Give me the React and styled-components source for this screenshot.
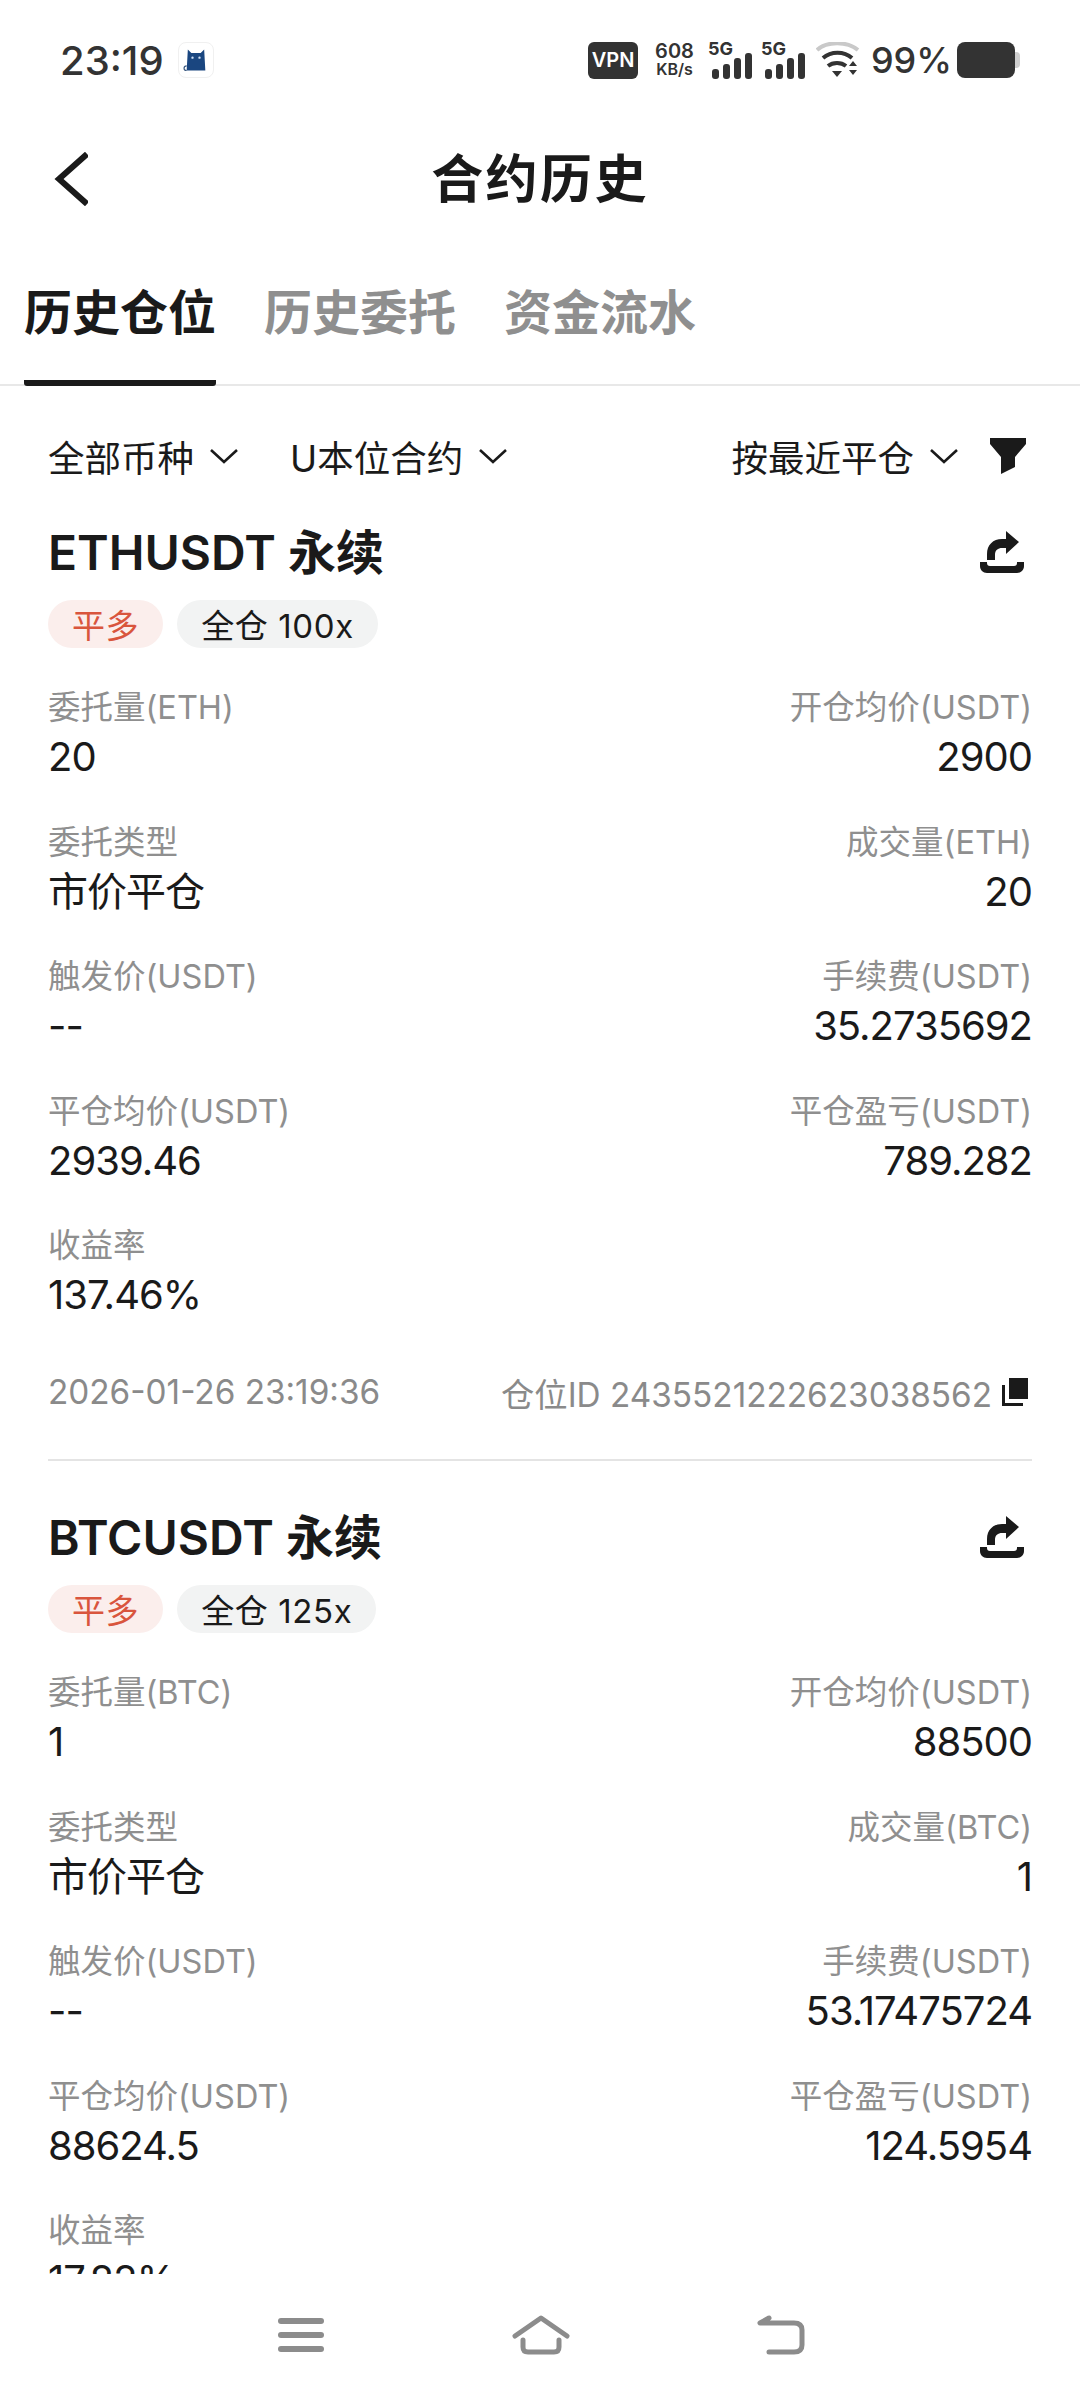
import React from 'react';
import styled, { createGlobalStyle } from 'styled-components';

const SANS = `'Inter', 'Noto Sans CJK SC', sans-serif`;

const positions = [
    {
        symbol: 'ETHUSDT 永续',
        leverage: '全仓 100x',
        unit: 'ETH',
        size: '20',
        open: '2900',
        filled: '20',
        fee: '35.2735692',
        close: '2939.46',
        pnl: '789.282',
        roi: '137.46%',
    },
    {
        symbol: 'BTCUSDT 永续',
        leverage: '全仓 125x',
        unit: 'BTC',
        size: '1',
        open: '88500',
        filled: '1',
        fee: '53.17475724',
        close: '88624.5',
        pnl: '124.5954',
        roi: '17.82%',
        cut: true,
    },
];

function Chevron() {
    return (
        <ChevronIcon viewBox="0 0 28 16" fill="none" stroke="#1a1a1a" strokeWidth="2.6">
            <path d="M1 2l13 12L27 2" />
        </ChevronIcon>
    );
}

function ShareIcon() {
    return (
        <ShareSvg viewBox="0 0 44 42" fill="#1a1a1a">
            <path d="M7 29v-6c0-9 6-15 15-15h4V0l13 11-13 12v-6h-4c-4 0-7 2-7 7v5z" />
            <path d="M0 31h7v1c0 2 1 3 3 3h24c2 0 3-1 3-3v-1h7v4c0 4-3 7-7 7H7c-4 0-7-3-7-7z" />
        </ShareSvg>
    );
}

function SignalBars() {
    return (
        <Signal>
            <SignalLabel>5G</SignalLabel>
            <Bars viewBox="0 0 40 26">
                <rect x="0" y="16" width="7" height="10" rx="3" />
                <rect x="11" y="11" width="7" height="15" rx="3" />
                <rect x="22" y="5" width="7" height="21" rx="3" />
                <rect x="33" y="0" width="7" height="26" rx="3" />
            </Bars>
        </Signal>
    );
}

function Position({ data }) {
    return (
        <Card>
            <CardHead>
                <Symbol>{data.symbol}</Symbol>
                <ShareIcon />
            </CardHead>
            <Tags>
                <Tag $red>平多</Tag>
                <Tag>{data.leverage}</Tag>
            </Tags>
            <Grid>
                <Field>
                    <Label>委托量({data.unit})</Label>
                    <Value>{data.size}</Value>
                </Field>
                <Field $right>
                    <Label>开仓均价(USDT)</Label>
                    <Value>{data.open}</Value>
                </Field>
                <Field>
                    <Label>委托类型</Label>
                    <Value>市价平仓</Value>
                </Field>
                <Field $right>
                    <Label>成交量({data.unit})</Label>
                    <Value>{data.filled}</Value>
                </Field>
                <Field>
                    <Label>触发价(USDT)</Label>
                    <Value>--</Value>
                </Field>
                <Field $right>
                    <Label>手续费(USDT)</Label>
                    <Value>{data.fee}</Value>
                </Field>
                <Field>
                    <Label>平仓均价(USDT)</Label>
                    <Value>{data.close}</Value>
                </Field>
                <Field $right>
                    <Label>平仓盈亏(USDT)</Label>
                    <Value>{data.pnl}</Value>
                </Field>
                <Field>
                    <Label>收益率</Label>
                    <Value>{data.roi}</Value>
                </Field>
            </Grid>
            {!data.cut && (
                <CardFoot>
                    <FootText>2026-01-26 23:19:36</FootText>
                    <FootRight>
                        <FootText>仓位ID 2435521222623038562</FootText>
                        <CopyIcon viewBox="0 0 26 28">
                            <path d="M7 0h19v21H7z" fill="#1a1a1a" />
                            <path d="M0 7h3v18h18v3H0z" fill="#1a1a1a" />
                        </CopyIcon>
                    </FootRight>
                </CardFoot>
            )}
        </Card>
    );
}

export default function App() {
    return (
        <Page>
            <GlobalStyle />
            <StatusBar>
                <StatusLeft>
                    <Clock>23:19</Clock>
                    <AppBadge>
                        <svg width="28" height="28" viewBox="0 0 24 24">
                            <path d="M5 3l3 3h8l3-3 1 18H4z" fill="#1a4680" />
                            <path d="M4 17c-3 0-3 4 0 4" fill="none" stroke="#3c5a80" strokeWidth="1" />
                            <circle cx="9" cy="10" r="1" fill="#cfe0f5" />
                            <circle cx="15" cy="10" r="1" fill="#cfe0f5" />
                        </svg>
                    </AppBadge>
                </StatusLeft>
                <StatusRight>
                    <VpnBadge>VPN</VpnBadge>
                    <Speed>
                        <span>608</span>
                        <SpeedUnit>KB/s</SpeedUnit>
                    </Speed>
                    <SignalBars />
                    <SignalBars />
                    <svg width="44" height="36" viewBox="0 0 44 36" fill="none">
                        <path d="M1 8C11-1 31-1 42 8" stroke="#c9c9c9" strokeWidth="4" />
                        <path d="M7 16c8-7 21-7 29 0" stroke="#333" strokeWidth="4" />
                        <path d="M12 24c5-4 13-4 18 0" stroke="#333" strokeWidth="4" />
                        <path d="M16 29h10l-5 6z" fill="#333" />
                        <path d="M33 24l4-5 4 5zM33 28h8l-4 5z" fill="#333" />
                    </svg>
                    <Battery>99%</Battery>
                    <BatteryIcon>
                        <BatteryFill />
                        <BatteryCap />
                    </BatteryIcon>
                </StatusRight>
            </StatusBar>

            <TitleBar>
                <BackIcon viewBox="0 0 34 54" fill="none" stroke="#1a1a1a" strokeWidth="6">
                    <path d="M33 2L5 27l28 25" />
                </BackIcon>
                <Title>合约历史</Title>
            </TitleBar>

            <Tabs>
                <Tab $active>历史仓位</Tab>
                <Tab>历史委托</Tab>
                <Tab>资金流水</Tab>
            </Tabs>

            <Filters>
                <FilterGroup>
                    <Filter>
                        全部币种
                        <Chevron />
                    </Filter>
                    <Filter>
                        U本位合约
                        <Chevron />
                    </Filter>
                </FilterGroup>
                <FilterGroup>
                    <Filter>
                        按最近平仓
                        <Chevron />
                    </Filter>
                    <svg width="36" height="36" viewBox="0 0 36 36" fill="#1a1a1a">
                        <path d="M0 0h36v6L25 19v10l-14 7V19L0 6z" />
                    </svg>
                </FilterGroup>
            </Filters>

            <List>
                {positions.map((p) => (
                    <Position key={p.symbol} data={p} />
                ))}
            </List>

            <NavBar>
                <svg width="46" height="34" viewBox="0 0 46 34" fill="#8c8c8c">
                    <rect x="0" y="0" width="46" height="6" rx="3" />
                    <rect x="0" y="14" width="46" height="6" rx="3" />
                    <rect x="0" y="28" width="46" height="6" rx="3" />
                </svg>
                <svg width="58" height="40" viewBox="0 0 58 40" fill="none" stroke="#8c8c8c" strokeWidth="5" strokeLinecap="round" strokeLinejoin="round">
                    <path d="M3 21L29 3l26 18" />
                    <path d="M11 25v7c0 4 2 5 5 5h26c3 0 5-1 5-5v-7" />
                </svg>
                <svg width="48" height="40" viewBox="0 0 48 40" fill="none" stroke="#8c8c8c" strokeWidth="5" strokeLinecap="round" strokeLinejoin="round">
                    <path d="M12 3L3 8h34c5 0 8 2 8 7v15c0 5-3 7-8 7H12" />
                </svg>
            </NavBar>
        </Page>
    );
}

const GlobalStyle = createGlobalStyle`
    html, body {
        margin: 0;
        padding: 0;
        background: #fff;
    }
`;

const Page = styled.div`
    background: #fff;
    box-sizing: border-box;
    color: #1a1a1a;
    font-family: ${SANS};
    height: 2400px;
    overflow: hidden;
    position: relative;
    width: 1080px;
`;

const StatusBar = styled.div`
    align-items: center;
    box-sizing: border-box;
    display: flex;
    height: 120px;
    justify-content: space-between;
    padding: 0 60px;
`;

const StatusLeft = styled.div`
    align-items: center;
    display: flex;
    gap: 14px;
`;

const Clock = styled.span`
    color: #333;
    font-size: 40px;
    font-weight: 500;
`;

const AppBadge = styled.span`
    align-items: center;
    border: 1px solid #f0f0f0;
    border-radius: 8px;
    display: flex;
    height: 34px;
    justify-content: center;
    width: 34px;
`;

const StatusRight = styled.div`
    align-items: center;
    color: #333;
    display: flex;
    gap: 11px;
`;

const VpnBadge = styled.span`
    align-items: center;
    background: #333;
    border-radius: 6px;
    color: #fff;
    display: flex;
    font-size: 20px;
    font-weight: 600;
    height: 37px;
    justify-content: center;
    margin-right: 6px;
    width: 50px;
`;

const Speed = styled.span`
    display: flex;
    flex-direction: column;
    font-size: 20px;
    font-weight: 600;
    line-height: 19px;
    margin-right: 5px;
    text-align: center;
`;

const SpeedUnit = styled.span`
    font-size: 16px;
    line-height: 17px;
`;

const Signal = styled.span`
    display: block;
    height: 38px;
    position: relative;
    width: 42px;
`;

const SignalLabel = styled.span`
    font-size: 18px;
    font-weight: 700;
    left: -2px;
    line-height: 15px;
    position: absolute;
    top: 0;
`;

const Bars = styled.svg`
    bottom: 0;
    fill: #333;
    height: 26px;
    position: absolute;
    right: 0;
    width: 40px;
`;

const Battery = styled.span`
    font-size: 36px;
    font-weight: 500;
`;

const BatteryIcon = styled.span`
    align-items: center;
    display: flex;
    margin-left: -6px;
`;

const BatteryFill = styled.span`
    background: #333;
    border-radius: 8px;
    display: block;
    height: 36px;
    width: 58px;
`;

const BatteryCap = styled.span`
    background: #cfcfcf;
    border-radius: 0 4px 4px 0;
    display: block;
    height: 16px;
    width: 5px;
`;

const TitleBar = styled.div`
    align-items: center;
    box-sizing: border-box;
    display: flex;
    height: 116px;
    justify-content: center;
    padding-bottom: 6px;
    position: relative;
`;

const BackIcon = styled.svg`
    height: 54px;
    left: 54px;
    position: absolute;
    top: 32px;
    width: 34px;
`;

const Title = styled.h1`
    font-size: 52px;
    font-weight: 700;
    letter-spacing: 2.4px;
    margin: 0;
`;

const Tabs = styled.div`
    border-bottom: 2px solid #e8e8e8;
    box-sizing: border-box;
    display: flex;
    gap: 48px;
    height: 150px;
    padding: 44px 0 0 24px;
`;

const Tab = styled.div`
    border-bottom: ${(p) => (p.$active ? '6px solid #1a1a1a' : 'none')};
    border-radius: 0 0 3px 3px;
    box-sizing: border-box;
    color: ${(p) => (p.$active ? '#1a1a1a' : '#8f8f8f')};
    font-size: 48px;
    font-weight: 700;
    height: 106px;
    line-height: 66px;
    width: 192px;
`;

const Filters = styled.div`
    align-items: center;
    display: flex;
    height: 40px;
    justify-content: space-between;
    margin-top: 50px;
    padding: 0 54px 0 48px;
`;

const FilterGroup = styled.div`
    align-items: center;
    display: flex;
    gap: 52px;

    &:last-child {
        gap: 32px;
    }
`;

const Filter = styled.div`
    align-items: center;
    display: flex;
    font-size: 36.5px;
    gap: 16px;
`;

const ChevronIcon = styled.svg`
    height: 16px;
    width: 28px;
`;

const List = styled.div`
    display: flex;
    flex-direction: column;
    padding: 0 48px;
`;

const Card = styled.div`
    border-bottom: 2px solid #e4e4e4;
    box-sizing: border-box;
    flex: none;
    height: 985px;
    padding-top: 42px;

    &:last-child {
        border-bottom: none;
    }
`;

const CardHead = styled.div`
    align-items: center;
    display: flex;
    height: 62px;
    justify-content: space-between;
    padding-right: 8px;
`;

const ShareSvg = styled.svg`
    height: 42px;
    margin-top: 6px;
    width: 44px;
`;

const Symbol = styled.div`
    font-size: 48px;
    font-weight: 600;
`;

const Tags = styled.div`
    display: flex;
    gap: 14px;
    margin-top: 20px;
`;

const Tag = styled.span`
    align-items: center;
    background: ${(p) => (p.$red ? '#fbeeec' : '#f2f3f3')};
    border-radius: 24px;
    color: ${(p) => (p.$red ? '#d9553d' : '#1a1a1a')};
    display: flex;
    font-size: 33px;
    height: 48px;
    letter-spacing: 0.6px;
    padding: 0 24px;
`;

const Grid = styled.div`
    display: grid;
    grid-template-columns: 1fr 1fr;
    grid-auto-rows: 134.6px;
    margin-top: 38px;
`;

const Field = styled.div`
    display: flex;
    flex-direction: column;
    gap: 2px;
    text-align: ${(p) => (p.$right ? 'right' : 'left')};
`;

const Label = styled.div`
    color: #8f8f8f;
    font-size: 32.5px;
    line-height: 44px;
`;

const Value = styled.div`
    font-size: 40px;
    letter-spacing: -1px;
    line-height: 50px;
`;

const CardFoot = styled.div`
    align-items: center;
    display: flex;
    justify-content: space-between;
    margin-top: 9px;
    padding-right: 4px;
`;

const FootRight = styled.div`
    align-items: center;
    display: flex;
    gap: 10px;
`;

const FootText = styled.span`
    color: #8a8a8a;
    font-size: 33.3px;
`;

const CopyIcon = styled.svg`
    height: 28px;
    width: 26px;
`;

const NavBar = styled.div`
    align-items: center;
    background: #fff;
    bottom: 0;
    box-sizing: border-box;
    display: flex;
    height: 126px;
    justify-content: space-between;
    left: 0;
    padding: 0 275px 4px 278px;
    position: absolute;
    right: 0;
`;
